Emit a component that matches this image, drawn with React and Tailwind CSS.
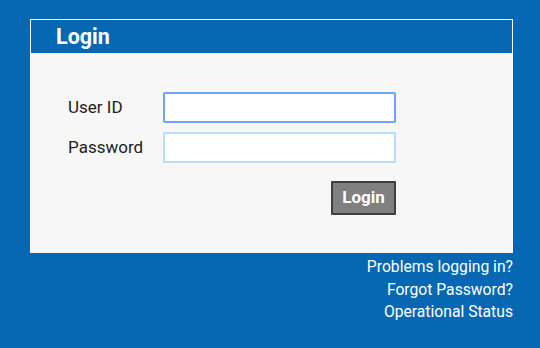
export default function App() {
  return (
    <main className="h-[348px] w-[540px] overflow-hidden bg-[#0668b3] pl-[30px] pt-[19px] font-['Roboto',sans-serif]">
      <div className="w-[483px]">
        <div className="flex h-[34px] items-center border border-b-0 border-white pl-[25px]">
          <h1 className="pt-[1px] text-[21.5px] font-bold leading-none text-white">Login</h1>
        </div>
        <form className="h-[200px] bg-[#f7f7f7] pl-[38px] pt-[39px]">
          <div className="flex items-center">
            <label className="w-[95px] text-[17px] text-[#222]">User ID</label>
            <input
              type="text"
              className="h-[31px] w-[233px] rounded-[2px] border-2 border-[#6aa5fb] bg-white outline-none"
            />
          </div>
          <div className="mt-[9px] flex items-center">
            <label className="w-[95px] text-[17px] text-[#222]">Password</label>
            <input
              type="password"
              className="h-[31px] w-[233px] rounded-[1px] border-2 border-[#b5def8] bg-white outline-none"
            />
          </div>
          <div className="mt-[18px] flex w-[328px] justify-end">
            <button
              type="button"
              className="h-[34px] w-[65px] rounded-[1px] border-2 border-[#3f3f3f] bg-[#808080] text-[17px] font-bold text-white"
            >
              Login
            </button>
          </div>
        </form>
        <div className="mt-[3px] flex flex-col items-end text-[15.7px] leading-[22.5px] text-white">
          <a href="#">Problems logging in?</a>
          <a href="#">Forgot Password?</a>
          <a href="#">Operational Status</a>
        </div>
      </div>
    </main>
  );
}
